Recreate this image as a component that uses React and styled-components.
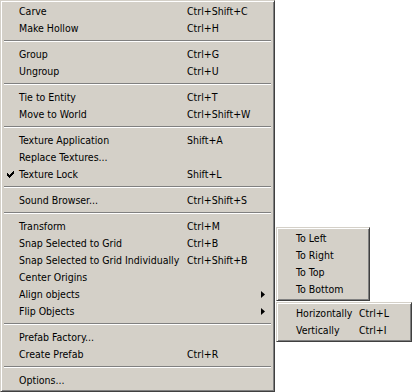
import React from "react";
import styled, { createGlobalStyle } from "styled-components";

const GlobalStyle = createGlobalStyle`
  html, body {
    margin: 0;
    padding: 0;
    background: #ffffff;
  }
  body {
    font-family: "DejaVu Sans Condensed", "DejaVu Sans", sans-serif;
    font-size: 10.5px;
    color: #000000;
  }
`;

const mainItems = [
  { label: "Carve", key: "Ctrl+Shift+C" },
  { label: "Make Hollow", key: "Ctrl+H" },
  "sep",
  { label: "Group", key: "Ctrl+G" },
  { label: "Ungroup", key: "Ctrl+U" },
  "sep",
  { label: "Tie to Entity", key: "Ctrl+T" },
  { label: "Move to World", key: "Ctrl+Shift+W" },
  "sep",
  { label: "Texture Application", key: "Shift+A" },
  { label: "Replace Textures..." },
  { label: "Texture Lock", key: "Shift+L", checked: true },
  "sep",
  { label: "Sound Browser...", key: "Ctrl+Shift+S" },
  "sep",
  { label: "Transform", key: "Ctrl+M" },
  { label: "Snap Selected to Grid", key: "Ctrl+B" },
  { label: "Snap Selected to Grid Individually", key: "Ctrl+Shift+B" },
  { label: "Center Origins" },
  { label: "Align objects", sub: true },
  { label: "Flip Objects", sub: true },
  "sep",
  { label: "Prefab Factory..." },
  { label: "Create Prefab", key: "Ctrl+R" },
  "sep",
  { label: "Options..." },
];

const alignItems = [
  { label: "To Left" },
  { label: "To Right" },
  { label: "To Top" },
  { label: "To Bottom" },
];

const flipItems = [
  { label: "Horizontally", key: "Ctrl+L" },
  { label: "Vertically", key: "Ctrl+I" },
];

const CheckMark = () => (
  <svg width="7" height="7" viewBox="0 0 7 7">
    <path d="M0 2h1v1h1v1h1V3h1V2h1V1h1V0h1v3h-1v1h-1v1h-1v1h-1v1h-1V6H1V5H0z" fill="#000" />
  </svg>
);

const Arrow = () => (
  <svg width="4" height="7" viewBox="0 0 4 7">
    <path d="M0 0L4 3.5L0 7z" fill="#000" />
  </svg>
);

function Menu({ items, width, checkCol, labelCol }) {
  return (
    <MenuBox width={width}>
      {items.map((item, i) =>
        item === "sep" ? (
          <Separator key={i} />
        ) : (
          <Row key={i}>
            <Check width={checkCol}>{item.checked && <CheckMark />}</Check>
            <Label width={labelCol}>{item.label}</Label>
            <Shortcut>{item.key}</Shortcut>
            {item.sub && (
              <SubArrow>
                <Arrow />
              </SubArrow>
            )}
          </Row>
        )
      )}
    </MenuBox>
  );
}

export default function App() {
  return (
    <>
      <GlobalStyle />
      <Screen>
        <Menu items={mainItems} width={275} checkCol={16} labelCol={168} />
        <Flyouts>
          <Menu items={alignItems} width={94} checkCol={17} labelCol={60} />
          <Menu items={flipItems} width={136} checkCol={17} labelCol={63} />
        </Flyouts>
      </Screen>
    </>
  );
}

const Screen = styled.div`
  display: flex;
  align-items: flex-start;
  width: 414px;
  height: 392px;
  overflow: hidden;
`;

const Flyouts = styled.div`
  display: flex;
  flex-direction: column;
  gap: 1px;
  margin-top: 227px;
  margin-left: 1px;
`;

const MenuBox = styled.div`
  box-sizing: border-box;
  width: ${(p) => p.width}px;
  background: #d4d0c8;
  border: 1px solid;
  border-color: #d4d0c8 #404040 #404040 #d4d0c8;
  box-shadow: inset 1px 1px #ffffff, inset -1px -1px #808080;
  padding: 2px;
  display: flex;
  flex-direction: column;
`;

const Row = styled.div`
  display: flex;
  align-items: center;
  height: 17px;
  line-height: 17px;
  position: relative;
  white-space: nowrap;
`;

const Check = styled.div`
  width: ${(p) => p.width}px;
  flex: none;
  display: flex;
  justify-content: center;
  box-sizing: border-box;
  padding-right: 1px;
`;

const Label = styled.div`
  width: ${(p) => p.width}px;
  flex: none;
`;

const Shortcut = styled.div`
  flex: 1;
`;

const SubArrow = styled.div`
  position: absolute;
  right: 7px;
  top: 5px;
  display: flex;
`;

const Separator = styled.div`
  margin: 3px 1px 4px;
  border-top: 1px solid #808080;
  border-bottom: 1px solid #ffffff;
`;
